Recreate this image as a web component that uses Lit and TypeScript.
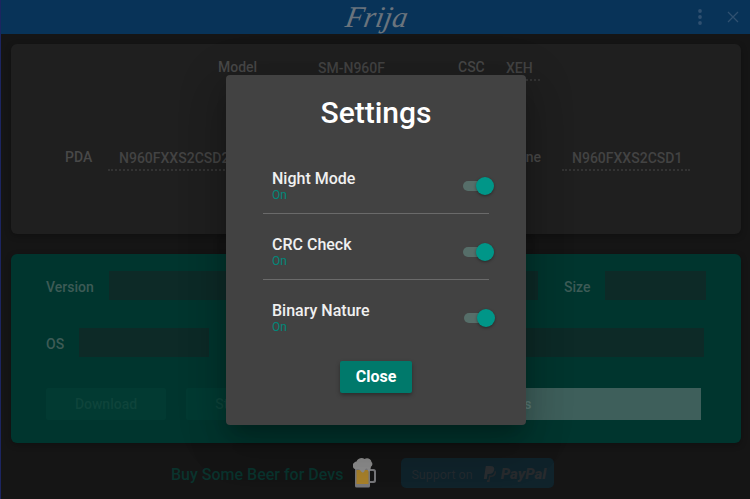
import { LitElement, html, css, svg } from 'lit';
import { customElement } from 'lit/decorators.js';

const settings = [
  { name: 'Night Mode', shift: false },
  { name: 'CRC Check', shift: false },
  { name: 'Binary Nature', shift: true },
];

const beer = svg`<svg class="beer" width="24" height="30" viewBox="0 0 24 30">
  <path d="M2 9h15v19a1.500 1.500 0 0 1-1.500 1.500h-12A1.500 1.500 0 0 1 2 28z" fill="#77777a"/>
  <path d="M3.500 12h12v14h-12z" fill="#a67f2a"/>
  <path d="M17 11h3.500a2.500 2.500 0 0 1 2.500 2.500v9a2.500 2.500 0 0 1-2.500 2.500H17v-2h3a1 1 0 0 0 1-1v-8a1 1 0 0 0-1-1h-3z" fill="#77777a"/>
  <path d="M0 9c-1-3 1-5 3.500-5.500C4.500.5 9-1 11.500 1 14-.5 18 .5 18.500 4c1.500 1 1 4-.5 4.500-.5 2.500-.5 5-2 5-1.500 0-1-3-2.500-3-2 0-1.500 4-3.500 4S7 10.500 4.500 11C2.500 11.500.5 11 0 9z" fill="#8b8b8b"/>
</svg>`;

const paypal = svg`<svg width="13" height="16" viewBox="0 0 13 16">
  <path d="M2.800 0h4.700c2.800 0 4.200 1.400 3.700 3.800-.5 2.800-2.400 4.300-5 4.300H4.600L3.800 13H.8z" fill="#2a2d30"/>
  <path d="M11.900 4.200c.9.700 1.300 1.800 1 3.100-.5 2.500-2.200 3.800-4.500 3.800H7.300L6.600 16H3.800l.3-2h1.200l.7-4.500h1.400c2.700 0 4.200-1.500 4.500-5.300z" fill="#25282b"/>
</svg>`;

@customElement('app-root')
export class AppRoot extends LitElement {
  static styles = css`
    :host {
      display: block;
      position: relative;
      width: 750px;
      height: 499px;
      overflow: hidden;
      background: #151515;
      font-family: Roboto, sans-serif;
      box-shadow: inset 1px 0 0 #1c2560;
    }

    .bar {
      position: relative;
      height: 34px;
      margin-left: 1px;
      background: #083358;
      display: flex;
      align-items: center;
      justify-content: center;
    }

    .logo {
      display: inline-block;
      margin-left: 2px;
      font-family: 'Liberation Serif', serif;
      font-style: italic;
      font-size: 30px;
      color: #6a747d;
      line-height: 34px;
      transform: skewX(-10deg);
    }

    .bar-icons {
      position: absolute;
      right: 11px;
      top: 0;
      height: 34px;
      display: flex;
      align-items: center;
      gap: 24px;
    }

    .card {
      margin: 10px 9px 20px 11px;
      border-radius: 6px;
      box-shadow: 0 2px 6px rgba(0, 0, 0, 0.25);
    }

    .info {
      height: 190px;
      background: #1f1f1f;
      display: flex;
      flex-direction: column;
      padding: 0 51px 0 54px;
      box-sizing: border-box;
    }

    .info-row {
      display: flex;
      align-items: center;
      height: 30px;
    }

    .info-row.top {
      margin-top: 7px;
      padding-left: 153px;
    }

    .info-row.bottom {
      margin-top: 60px;
    }

    .lbl {
      font-size: 14px;
      font-weight: 500;
      color: #484848;
      transform: translateY(1px);
    }

    .val {
      font-size: 14px;
      font-weight: 500;
      color: #434343;
      height: 30px;
      line-height: 34px;
      padding-left: 10px;
      border-bottom: 2px dotted #333;
      box-sizing: border-box;
    }

    .spacer {
      flex: 1;
    }

    .download {
      height: 189px;
      margin-top: 0;
      background: #00352e;
      padding: 17px 35px 0;
      box-sizing: border-box;
    }

    .dl-row {
      display: flex;
      align-items: center;
      height: 29px;
      margin-bottom: 28px;
    }

    .dl-lbl {
      font-size: 14px;
      font-weight: 500;
      color: #3d5b56;
      transform: translateY(1px);
    }

    .field {
      height: 29px;
      background: #0d2a27;
      box-sizing: border-box;
    }

    .btns {
      display: flex;
      gap: 20px;
      margin-top: 31px;
    }

    .btn {
      height: 32px;
      line-height: 32px;
      border-radius: 2px;
      background: #023a32;
      color: #0e443b;
      font-size: 14px;
      font-weight: 500;
      text-align: center;
      width: 120px;
    }

    .btn.main {
      flex: none;
      width: 261px;
      margin-left: 114px;
      background: #3e5f5b;
      color: #5c7c78;
      border-radius: 0;
      text-align: left;
      padding-left: 22px;
      box-sizing: border-box;
    }

    .foot {
      display: flex;
      align-items: center;
      height: 30px;
      margin-top: -5px;
      padding-left: 171px;
    }

    .beer-text {
      font-size: 16px;
      font-weight: 500;
      color: #0a332d;
      transform: translateY(1px);
    }

    .beer {
      margin-left: 10px;
      display: block;
    }

    .support {
      margin-left: 24px;
      width: 153px;
      height: 30px;
      background: #10232b;
      border-radius: 5px;
      display: flex;
      align-items: center;
      box-sizing: border-box;
      padding: 2px 0 0 10px;
      gap: 10px;
      color: #232a2f;
      font-size: 12.500px;
    }

    .pp {
      display: flex;
      align-items: center;
      gap: 5px;
    }

    .pp-word {
      font-size: 15px;
      font-weight: 900;
      font-style: italic;
      color: #282b2e;
    }

    .dialog {
      position: absolute;
      left: 226px;
      top: 75px;
      width: 300px;
      height: 350px;
      background: #424242;
      border-radius: 4px;
      box-sizing: border-box;
      padding: 0 37px;
      box-shadow: 0 11px 15px -7px rgba(0, 0, 0, 0.2),
        0 24px 38px 3px rgba(0, 0, 0, 0.14),
        0 9px 46px 8px rgba(0, 0, 0, 0.12);
    }

    h2 {
      margin: 0;
      padding-top: 19px;
      height: 73px;
      box-sizing: border-box;
      text-align: center;
      font-size: 30px;
      line-height: 37px;
      font-weight: 500;
      color: #fff;
    }

    .row {
      height: 66px;
      box-sizing: border-box;
      display: flex;
      align-items: center;
      justify-content: space-between;
      padding-left: 9px;
      border-bottom: 1px solid #6a6a6a;
    }

    .row:last-of-type {
      border-bottom: 0;
    }

    .name {
      font-size: 16px;
      font-weight: 500;
      color: #f0f0f0;
      line-height: 18px;
    }

    .state {
      font-size: 12px;
      color: #00897b;
      line-height: 14px;
    }

    .text {
      margin-top: 10px;
    }

    .toggle {
      position: relative;
      width: 27px;
      height: 10px;
      border-radius: 5px;
      background: #566e69;
      margin-right: -1px;
      margin-top: 10px;
    }

    .toggle.shift {
      margin-right: -2px;
    }

    .toggle::after {
      content: '';
      position: absolute;
      right: -4px;
      top: -4px;
      width: 18px;
      height: 18px;
      border-radius: 50%;
      background: #009688;
      box-shadow: 0 1px 3px rgba(0, 0, 0, 0.4);
    }

    .close {
      display: block;
      margin: 15px auto 0;
      width: 72px;
      height: 32px;
      line-height: 32px;
      padding: 0;
      border: 0;
      border-radius: 2px;
      background: #00796b;
      color: #fff;
      font-family: inherit;
      font-size: 16px;
      font-weight: 700;
      box-shadow: 0 2px 4px rgba(0, 0, 0, 0.35);
    }
  `;

  render() {
    return html`
      <div class="bar">
        <span class="logo">Frija</span>
        <div class="bar-icons">
          <svg width="6" height="18" viewBox="0 0 6 18" fill="#2f5070">
            <circle cx="3" cy="3" r="1.900"/><circle cx="3" cy="9" r="1.900"/><circle cx="3" cy="15" r="1.900"/>
          </svg>
          <svg width="12" height="12" viewBox="0 0 12 12" stroke="#2f5070" stroke-width="1.300" fill="none">
            <path d="M1 1l10 10M11 1L1 11"/>
          </svg>
        </div>
      </div>

      <div class="card info">
        <div class="info-row top">
          <span class="lbl" style="width:73px">Model</span>
          <span class="val" style="width:120px;padding-left:27px">SM-N960F</span>
          <span class="spacer" style="flex:none;width:47px"></span>
          <span class="lbl" style="width:40px">CSC</span>
          <span class="val" style="width:42px;padding-left:8px">XEH</span>
        </div>
        <div class="info-row bottom">
          <span class="lbl" style="width:43px">PDA</span>
          <span class="val" style="width:128px;padding-left:11px">N960FXXS2CSD2</span>
          <span class="spacer"></span>
          <span class="lbl" style="width:61px">Phone</span>
          <span class="val" style="width:128px">N960FXXS2CSD1</span>
        </div>
      </div>

      <div class="card download">
        <div class="dl-row">
          <span class="dl-lbl" style="width:63px">Version</span>
          <div class="field" style="width:429px"></div>
          <span class="dl-lbl" style="margin-left:26px;width:41px">Size</span>
          <div class="field" style="width:101px"></div>
        </div>
        <div class="dl-row">
          <span class="dl-lbl" style="width:33px">OS</span>
          <div class="field" style="width:130px"></div>
          <div class="spacer"></div>
          <div class="field" style="width:300px;margin-right:2px"></div>
        </div>
        <div class="btns">
          <div class="btn">Download</div>
          <div class="btn">Stop Task</div>
          <div class="btn main">Downloads</div>
        </div>
      </div>

      <div class="foot">
        <span class="beer-text">Buy Some Beer for Devs</span>
        ${beer}
        <div class="support">
          <span>Support on</span>
          <span class="pp">${paypal}<span class="pp-word">PayPal</span></span>
        </div>
      </div>

      <div class="dialog">
        <h2>Settings</h2>
        ${settings.map(
          (s) => html`
            <div class="row">
              <div class="text">
                <div class="name">${s.name}</div>
                <div class="state">On</div>
              </div>
              <div class="toggle ${s.shift ? 'shift' : ''}"></div>
            </div>
          `
        )}
        <button class="close">Close</button>
      </div>
    `;
  }
}
